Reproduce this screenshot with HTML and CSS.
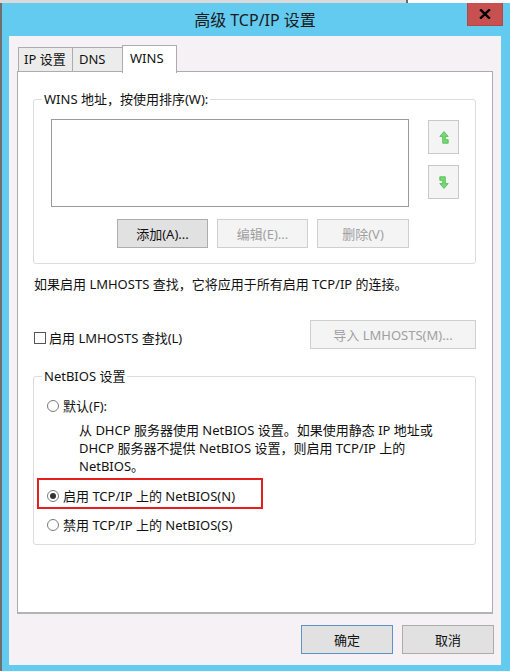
FILE: index.html
```html
<!DOCTYPE html>
<html lang="zh-CN">
<head>
<meta charset="utf-8">
<title>高级 TCP/IP 设置</title>
<link rel="stylesheet" href="styles.css">
</head>
<body>
<div class="behind"></div>
<div class="desk">
  <div class="edge"></div>
  <div class="window">
    <div class="titlebar">
      <span></span>
      <span class="title">高级 TCP/IP 设置</span>
      <button class="close" aria-label="关闭">
        <svg width="12" height="10" viewBox="0 0 12 10"><path d="M2 1.2 L10 8.8 M10 1.2 L2 8.8" stroke="#000" stroke-width="2.4" stroke-linecap="square"/></svg>
      </button>
    </div>
    <div class="client">
      <div class="tabs">
        <div class="tab tab-ip">IP 设置</div>
        <div class="tab tab-dns">DNS</div>
        <div class="tab tab-wins active">WINS</div>
      </div>
      <div class="panel">
        <div class="group wins">
          <span class="legend">WINS 地址，按使用排序(W):</span>
          <div class="wins-body">
            <div class="wins-main">
              <div class="listbox"></div>
              <div class="btn-row">
                <button class="btn w91">添加(A)...</button>
                <button class="btn w91 disabled">编辑(E)...</button>
                <button class="btn w92 disabled">删除(V)</button>
              </div>
            </div>
            <div class="arrows">
              <button class="arrow-btn" aria-label="上移">
                <svg width="10" height="13" viewBox="0 0 10 13"><path d="M5 0.6 L9.2 5.4 L6.3 5.4 L6.3 8.7 L9.2 8.7 L9.2 12.2 L3.7 12.2 L3.7 5.4 L0.8 5.4 Z" fill="#72dc72" stroke="#4fb84f" stroke-width="0.8" stroke-linejoin="round"/></svg>
              </button>
              <button class="arrow-btn" aria-label="下移">
                <svg width="10" height="13" viewBox="0 0 10 13"><path d="M5 12.4 L0.8 7.6 L3.7 7.6 L3.7 4.3 L0.8 4.3 L0.8 0.8 L6.3 0.8 L6.3 7.6 L9.2 7.6 Z" fill="#72dc72" stroke="#4fb84f" stroke-width="0.8" stroke-linejoin="round"/></svg>
              </button>
            </div>
          </div>
        </div>
        <p class="note">如果启用 LMHOSTS 查找，它将应用于所有启用 TCP/IP 的连接。</p>
        <div class="check-row">
          <label class="check"><span class="box"></span>启用 LMHOSTS 查找(L)</label>
          <button class="btn disabled import">导入 LMHOSTS(M)...</button>
        </div>
        <div class="group netbios">
          <span class="legend">NetBIOS 设置</span>
          <div class="radio-row"><span class="radio"></span>默认(F):</div>
          <p class="desc">从 DHCP 服务器使用 NetBIOS 设置。如果使用静态 IP 地址或<br>DHCP 服务器不提供 NetBIOS 设置，则启用 TCP/IP 上的<br>NetBIOS。</p>
          <div class="highlight">
            <div class="radio-row"><span class="radio checked"></span>启用 TCP/IP 上的 NetBIOS(N)</div>
          </div>
          <div class="radio-row last"><span class="radio"></span>禁用 TCP/IP 上的 NetBIOS(S)</div>
        </div>
      </div>
      <div class="footer">
        <button class="btn w92 default">确定</button>
        <button class="btn w92">取消</button>
      </div>
    </div>
  </div>
</div>
</body>
</html>
```

FILE: styles.css
```css
* {
  box-sizing: border-box;
}

html, body {
  margin: 0;
  padding: 0;
}

body {
  width: 510px;
  height: 671px;
  overflow: hidden;
  background: #707070;
  font-family: "Noto Sans", "Noto Sans CJK SC", sans-serif;
  font-size: 13px;
  color: #111;
}

.behind {
  height: 3px;
  background: linear-gradient(to right, #dadada 0, #dadada 406px, #6a6a6a 406px, #6a6a6a 408px, #fbfbfb 408px);
}

.desk {
  display: flex;
  height: 668px;
}

.edge {
  width: 2px;
  background: #6f6f6f;
}

.window {
  width: 508px;
  background: #63cbf0;
  padding: 0 9px 6px 7px;
  display: flex;
  flex-direction: column;
}

.titlebar {
  height: 33px;
  display: grid;
  grid-template-columns: 1fr auto 1fr;
  align-items: center;
}

.title {
  font-size: 16px;
  line-height: 20px;
  color: #1a1a1a;
  padding-top: 1px;
}

.close {
  justify-self: end;
  align-self: start;
  width: 36px;
  height: 23px;
  margin-right: -2px;
  padding: 0;
  border: 1px solid #b44646;
  border-top: none;
  background: #c75050;
  display: flex;
  align-items: center;
  justify-content: center;
}

.client {
  flex: 1;
  background: #f5f1f5;
  padding: 9px 7px 11px 8px;
  display: flex;
  flex-direction: column;
}

.tabs {
  display: flex;
  align-items: flex-end;
  height: 26px;
  margin-left: 1px;
}

.tab {
  height: 24px;
  border: 1px solid #acacac;
  border-bottom: none;
  background: #ececec;
  line-height: 23px;
  padding-left: 5px;
  white-space: nowrap;
}

.tab-ip {
  width: 55px;
}

.tab-dns {
  width: 51px;
  margin-left: -1px;
  padding-left: 6px;
}

.tab-wins {
  width: 55px;
  margin-left: -1px;
}

.tab.active {
  height: 28px;
  margin-bottom: -2px;
  background: #fff;
  position: relative;
  z-index: 2;
  padding-left: 7px;
  line-height: 25px;
}

.panel {
  flex: 1;
  background: #fff;
  border: 1px solid #acacac;
  border-bottom: 2px solid #b4b4b4;
  margin-right: 1px;
  padding: 27px 16px 0 15px;
}

.group {
  position: relative;
  border: 1px solid #dcdcdc;
  border-radius: 3px;
}

.legend {
  position: absolute;
  top: -9px;
  left: 8px;
  background: #fff;
  padding: 0 2px;
  line-height: 17px;
  white-space: nowrap;
}

.wins {
  padding: 19px 16px 15px 17px;
}

.wins-body {
  display: flex;
  gap: 19px;
}

.wins-main {
  width: 358px;
}

.listbox {
  height: 88px;
  border: 1px solid #9a9aa2;
  background: #fff;
}

.btn-row {
  display: flex;
  justify-content: flex-end;
  gap: 9px;
  margin-top: 12px;
}

.btn {
  height: 29px;
  padding: 0;
  border: 1px solid #adadad;
  background: #e1e1e1;
  font-family: inherit;
  font-size: 13px;
  color: #111;
  white-space: nowrap;
}

.w91 {
  width: 91px;
}

.w92 {
  width: 92px;
}

.btn.disabled {
  background: #f4f4f4;
  border-color: #cfcfcf;
  color: #a0a0a0;
}

.btn.default {
  border-color: #5c93c9;
}

.arrows {
  display: flex;
  flex-direction: column;
  gap: 11px;
  padding-top: 1px;
}

.arrow-btn {
  width: 31px;
  height: 34px;
  padding: 0;
  border: 1px solid #c9c9c9;
  background: #f4f4f4;
  display: flex;
  align-items: center;
  justify-content: center;
}

.note {
  margin: 11px 0 0 1px;
  line-height: 18px;
  white-space: nowrap;
}

.check-row {
  margin-top: 27px;
  display: flex;
  justify-content: space-between;
  align-items: center;
}

.check {
  display: flex;
  align-items: center;
  gap: 3px;
  margin-left: 1px;
  margin-top: 6px;
  line-height: 18px;
}

.box {
  width: 12px;
  height: 12px;
  border: 1px solid #555;
  background: #fff;
}

.import {
  width: 166px;
}

.netbios {
  margin-top: 27px;
  padding: 20px 0 10px 13px;
}

.radio-row {
  display: flex;
  align-items: center;
  line-height: 18px;
  height: 18px;
  white-space: nowrap;
}

.radio {
  width: 12px;
  height: 12px;
  border: 1px solid #7a7a7a;
  border-radius: 50%;
  background: #fff;
  margin-right: 4px;
  display: flex;
  align-items: center;
  justify-content: center;
}

.radio.checked::after {
  content: "";
  width: 6px;
  height: 6px;
  border-radius: 50%;
  background: #333;
}

.desc {
  margin: 6px 0 0 32px;
  line-height: 18px;
  white-space: nowrap;
}

.highlight {
  margin: 3px 0 0 -10px;
  width: 226px;
  border: 2px solid #e61e1e;
  padding: 7px 0 2px 8px;
}

.radio-row.last {
  margin-top: 7px;
}

.footer {
  display: flex;
  justify-content: flex-end;
  gap: 9px;
  margin-top: 11px;
}
```
